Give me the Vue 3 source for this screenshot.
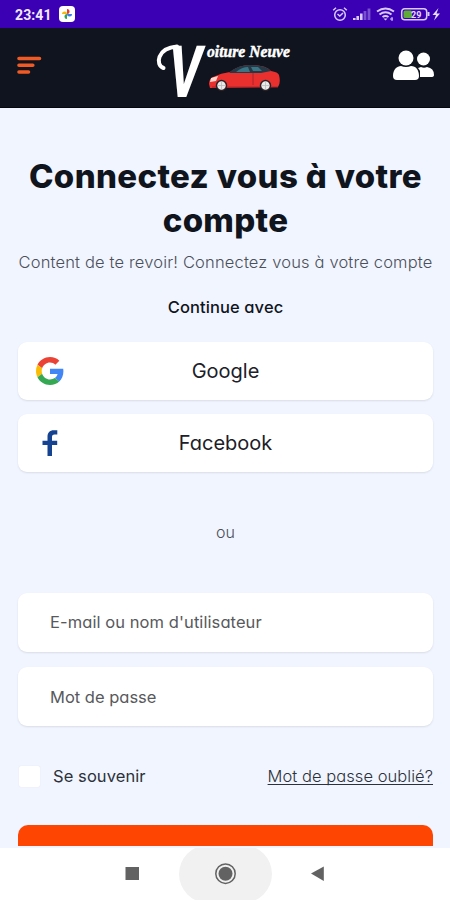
<script setup>
const providers = [
  { id: 'google', label: 'Google' },
  { id: 'facebook', label: 'Facebook' },
]
const fields = [
  { id: 'email', label: "E-mail ou nom d'utilisateur" },
  { id: 'password', label: 'Mot de passe' },
]
</script>

<template>
  <div class="screen">
    <div class="status">
      <span class="time">23:41</span>
      <svg class="photos" width="16" height="16" viewBox="0 0 16 16">
        <rect width="16" height="16" rx="4" fill="#fff" />
        <path d="M8 8V3a2.5 2.5 0 0 1 0 5" fill="#e33b2e" />
        <path d="M8 8h5a2.5 2.5 0 0 1-5 0" fill="#3b7ded" />
        <path d="M8 8v5a2.5 2.5 0 0 1 0-5" fill="#31a350" />
        <path d="M8 8H3a2.5 2.5 0 0 1 5 0" fill="#f6b90c" />
      </svg>
      <svg class="indicators" width="110" height="20" viewBox="0 0 110 20" fill="none" stroke="#d9cbff">
        <circle cx="9" cy="11" r="5.3" stroke-width="1.5" />
        <path d="M2.2 6.2 5 3.8M15.8 6.2 13 3.8M6.5 10l2.3 2L12 9" stroke-width="1.5" />
        <path d="M23.3 14v2M26.7 12v4M30.3 9.5v6.5" stroke-width="2.6" />
        <path d="M34 7v9M38 4.500v11.500" stroke="#7950cf" stroke-width="2.800" />
        <path d="M46 7.500q8.500-6 17 0M48.500 10.500q6-4.500 12 0M51.500 13q3-2 6 0" stroke-width="1.900" />
        <path d="M52.500 14.500h4l-2 2z" fill="#d9cbff" stroke="none" />
        <path d="M59 15h3M61 13v4" stroke-width="1" />
        <rect x="70.700" y="4.700" width="25" height="11" rx="3" stroke-width="1.500" />
        <rect x="72.500" y="6.500" width="8.500" height="7.500" rx="1.500" fill="#62aa38" stroke="none" />
        <path d="M97.500 8v4" stroke-width="2" />
        <text x="80" y="14" class="charge">29</text>
        <path d="M107.500 4l-6 7h3.500l-2 5.500 6-7H105.500z" fill="#e8deff" stroke="none" />
      </svg>
    </div>

    <header class="header">
      <svg class="menu" width="26" height="22" viewBox="0 0 26 22" stroke="#f15a24" stroke-width="3.600" stroke-linecap="round">
        <path d="M3 3.500h20.500M3 10.300h13.800M3 17h9.500" />
      </svg>
      <svg class="logo" width="150" height="70" viewBox="0 0 150 70">
        <text transform="translate(15.500 62) skewX(-8)" class="logo-v" textLength="33" lengthAdjust="spacingAndGlyphs">V</text>
        <path d="M13.500 33C5 30 7 13 27 11.500" fill="none" stroke="#fff" stroke-width="4" stroke-linecap="round" />
        <text x="57" y="22" class="logo-name" textLength="83" lengthAdjust="spacingAndGlyphs">oiture Neuve</text>
        <path d="M59 49q0-5 4-7 8-4 17-5 9-7 20-7 15 0 21 6 7 1 8 4 2 8-1 12L60 53z" fill="#e9302f" />
        <path d="M79 38q8-8 21-8 15 0 21 6l-10 2H82z" fill="#263846" />
        <path d="M86 37q6-5 12-5l2 5zM101 32h7l4 4h-9z" fill="#397584" />
        <path d="M61 43l7-2-2 5-6 1z" fill="#ffd6ce" />
        <path d="M62 52h66M103 38v12" stroke="#ac2328" stroke-width="1" />
        <g fill="#e9e9e9" stroke="#2c2025" stroke-width="1.500">
          <circle cx="71.500" cy="50.500" r="5" /><circle cx="115.500" cy="50.500" r="5" />
        </g>
        <path d="M71.500 47v7M68 50.500h7M115.500 47v7M112 50.500h7" stroke="#bbb" stroke-width=".8" />
      </svg>
      <svg class="people" width="43" height="32" viewBox="0 0 43 32" fill="#fff">
        <circle cx="30.500" cy="9" r="6.500" />
        <path d="M27 27V21q-1-2-2-3l3-1q3 1.500 6 0 7 1 7 8 0 2-3 2z" />
        <circle cx="13" cy="8" r="7.500" />
        <path d="M0 26c0-6.500 4-10 8-10q5 2 10 0c5 0 8 4 8 10q0 4-4 4H4q-4 0-4-4z" />
      </svg>
    </header>

    <main class="content">
      <h1 class="title"><span class="one">Connectez vous à votre</span><br /><span class="two">compte</span></h1>
      <p class="subtitle">Content de te revoir! Connectez vous à votre compte</p>
      <p class="continue">Continue avec</p>
      <div class="providers">
        <button v-for="p in providers" :key="p.id" class="provider" type="button">
          <svg v-if="p.id === 'google'" class="brand" width="28" height="28" viewBox="0 0 48 48">
            <path fill="#EA4335" d="M24 9.500c3.540 0 6.710 1.220 9.210 3.600l6.850-6.850C35.900 2.380 30.470 0 24 0 14.620 0 6.510 5.380 2.560 13.220l7.980 6.190C12.430 13.720 17.740 9.500 24 9.500z" />
            <path fill="#4285F4" d="M46.980 24.550c0-1.570-.15-3.090-.38-4.550H24v9.020h12.940c-.58 2.960-2.260 5.480-4.780 7.180l7.730 6c4.510-4.180 7.090-10.360 7.090-17.650z" />
            <path fill="#FBBC05" d="M10.530 28.590A14.500 14.500 0 0 1 9.770 24c0-1.600.27-3.140.76-4.590l-7.980-6.190A24 24 0 0 0 0 24c0 3.880.92 7.540 2.560 10.780l7.970-6.190z" />
            <path fill="#34A853" d="M24 48c6.480 0 11.930-2.130 15.890-5.810l-7.730-6C30.010 37.640 27.240 38.500 24 38.500c-6.260 0-11.570-4.220-13.470-9.910l-7.980 6.190C6.510 42.620 14.620 48 24 48z" />
          </svg>
          <svg v-else class="brand" width="28" height="28" viewBox="0 0 28 28">
            <path d="M11.500 27V16H6.500v-4.200h5V8c0-4.500 2.200-6.800 6.200-6.800h3.600v4.200h-2.700c-2 0-2.600 1-2.600 2.700v3.700h5.200V16H16v11z" fill="#154391" />
          </svg>
          <span class="provider-label">{{ p.label }}</span>
        </button>
      </div>
      <p class="or">ou</p>
      <div class="fields">
        <div v-for="f in fields" :key="f.id" class="field" :class="f.id"><span>{{ f.label }}</span></div>
      </div>
      <div class="options">
        <span class="checkbox"></span>
        <span class="remember">Se souvenir</span>
        <a class="forgot">Mot de passe oublié?</a>
      </div>
      <div class="submit"></div>
    </main>

    <nav class="nav">
      <svg width="450" height="52" viewBox="0 0 450 52">
        <rect x="179" y="-3" width="93" height="58" rx="29" fill="#f1f1f1" />
        <rect x="125.500" y="19" width="13.500" height="13" fill="#626262" />
        <circle cx="225.500" cy="25.700" r="9.700" fill="none" stroke="#626262" stroke-width="1.500" />
        <circle cx="225.500" cy="25.700" r="7" fill="#626262" />
        <path d="M311 25.500 323.800 18.500v14.500z" fill="#626262" />
      </svg>
    </nav>
  </div>
</template>

<style>
body { margin: 0; }
</style>

<style scoped>
* { box-sizing: border-box; }
.screen {
  width: 450px;
  height: 900px;
  overflow: hidden;
  display: flex;
  flex-direction: column;
  background: #f1f5ff;
  font-family: Inter, "Open Sans", sans-serif;
  font-feature-settings: "cv11" 1;
  color: #10141d;
}
.status {
  height: 28px;
  flex: none;
  display: flex;
  align-items: center;
  background: #3b00b3;
  padding: 0 9px 0 15px;
}
.time { color: #f1eaff; font: 700 14px Roboto, sans-serif; letter-spacing: .1px; width: 44px; padding-top: 1px; }
.indicators { margin-left: auto; }
.charge { font: 700 9px Roboto, sans-serif; fill: #e8deff; stroke: none; }
.header {
  height: 80px;
  flex: none;
  display: flex;
  align-items: center;
  background: #0f141e;
  border-bottom: 1px solid #05070b;
}
.menu { margin: 0 0 4px 16px; }
.logo { margin-left: 108px; margin-top: 5px; overflow: visible; }
.people { margin-left: 93px; margin-bottom: 3px; }
.logo-v { font: 800 72px/1 Roboto, sans-serif; fill: #fff; }
.logo-name { font: italic 700 17px "Liberation Serif", serif; fill: #fff; stroke: #fff; stroke-width: .5px; }
.content { height: 740px; flex: none; padding: 47px 17px 0 18px; display: flex; flex-direction: column; }
.title, p { margin: 0; text-align: center; white-space: nowrap; }
.title { font-size: 33px; line-height: 43.500px; font-weight: 800; height: 87px; }
.one { letter-spacing: .36px; }
.two { letter-spacing: .3px; }
.subtitle { font-size: 16.500px; line-height: 24px; font-weight: 300; margin-top: 8px; color: #4b5059; letter-spacing: .16px; }
.continue { font-size: 16.500px; line-height: 24px; font-weight: 500; margin-top: 21px; letter-spacing: .1px; }
.providers { display: flex; flex-direction: column; gap: 14px; margin-top: 23px; }
.provider {
  height: 58px;
  display: flex;
  align-items: center;
  border: 0;
  border-radius: 9px;
  background: #fff;
  box-shadow: 0 1px 2px #d9dce5;
  padding: 0 18px;
  font: inherit;
  font-feature-settings: inherit;
  color: #1c2028;
}
.provider-label { flex: 1; margin-right: 28px; font-size: 20px; }
.or { margin-top: 48px; font-size: 16px; line-height: 24px; font-weight: 300; color: #4b5059; }
.fields { display: flex; flex-direction: column; gap: 15px; margin-top: 49px; }
.field {
  height: 59px;
  display: flex;
  align-items: center;
  border-radius: 9px;
  background: #fff;
  box-shadow: 0 1px 2px #d9dce5;
  padding: 0 32px 2px;
  font-size: 16.500px;
  color: #58595c;
}
.email { letter-spacing: .08px; }
.password { padding-bottom: 0; }
.options { height: 24px; margin-top: 38px; display: flex; align-items: center; font-size: 16.500px; color: #2c313a; }
.checkbox { width: 21px; height: 21px; margin-left: 1px; border-radius: 2px; background: #fff; box-shadow: 0 0 1px #d5d8df; }
.remember { margin-left: 13px; letter-spacing: .08px; }
.forgot { margin-left: auto; text-decoration: underline; text-decoration-skip-ink: none; font-weight: 300; text-underline-offset: 2px; text-decoration-thickness: 1px; letter-spacing: .05px; }
.submit { height: 21px; margin-top: 37px; border-radius: 10px 10px 0 0; background: #ff4502; }
.nav { height: 52px; background: #fff; }
.nav svg { display: block; }
</style>
